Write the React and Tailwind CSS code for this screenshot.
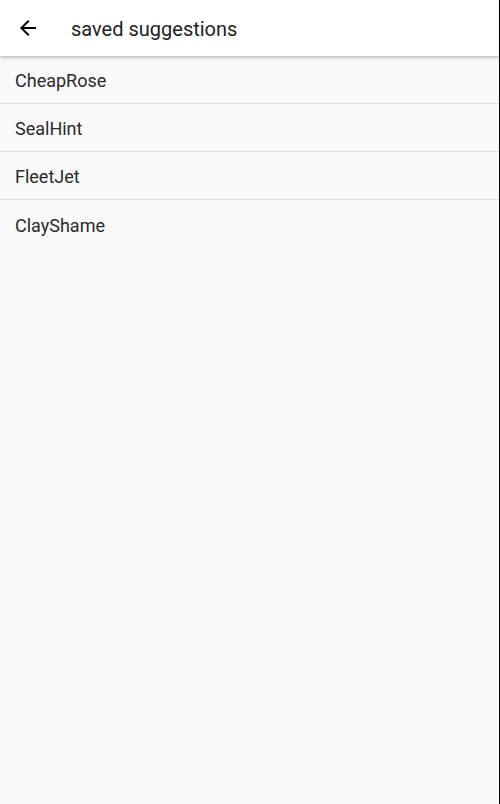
export default function App() {
  const items = ["CheapRose", "SealHint", "FleetJet", "ClayShame"];
  return (
    <div className="w-[500px] h-[804px] flex bg-[#fafafa]" style={{ fontFamily: "Roboto, 'Liberation Sans', sans-serif" }}>
      <div className="flex-1 flex flex-col relative">
        <div className="h-14 bg-white flex items-center relative z-10 shadow-[0_2px_4px_rgba(0,0,0,0.2),0_1px_2px_rgba(0,0,0,0.1)]">
          <div className="w-14 h-14 flex items-center justify-center">
            <svg width="24" height="24" viewBox="0 0 24 24" className="-ml-[1px] -mt-[1px]">
              <path d="M20 11H7.83l5.59-5.59L12 4l-8 8 8 8 1.41-1.41L7.83 13H20v-2z" fill="#000" />
            </svg>
          </div>
          <div className="ml-[15px] text-[20px] text-[#222222] leading-none mt-[1px]">saved suggestions</div>
        </div>
        <div className="flex flex-col">
          {items.map((t, i) => (
            <div
              key={t}
              className={`h-12 flex items-center px-[15px] text-[18px] text-[#2a2a2a] ${i < items.length - 1 ? "border-b border-[#e4e4e4]" : ""}`}
            >
              <span className="mt-[2px]">{t}</span>
            </div>
          ))}
        </div>
      </div>
      <div className="w-px bg-black" />
    </div>
  );
}
